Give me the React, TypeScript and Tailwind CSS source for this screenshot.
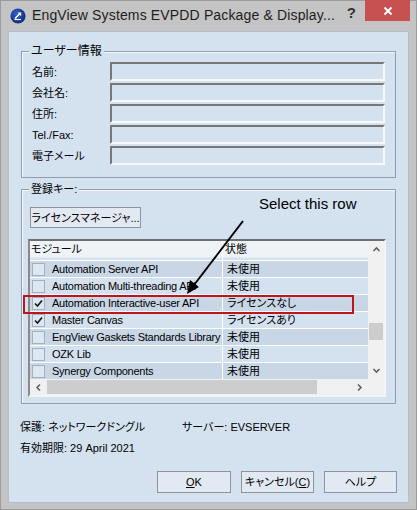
import React from "react";

const rows = [
  { name: "Automation Server API", status: "未使用", checked: false, dark: true },
  { name: "Automation Multi-threading API", status: "未使用", checked: false, dark: false },
  { name: "Automation Interactive-user API", status: "ライセンスなし", checked: true, dark: true },
  { name: "Master Canvas", status: "ライセンスあり", checked: true, dark: false },
  { name: "EngView Gaskets Standards Library", status: "未使用", checked: false, dark: true },
  { name: "OZK Lib", status: "未使用", checked: false, dark: false },
  { name: "Synergy Components", status: "未使用", checked: false, dark: true },
];

const fields = ["名前:", "会社名:", "住所:", "Tel./Fax:", "電子メール"];

function Check({ checked }: { checked: boolean }) {
  return (
    <div className="w-[13px] h-[13px] border border-[#a3afbf] bg-[#dde7f2] flex items-center justify-center shrink-0">
      {checked && (
        <svg width="11" height="11" viewBox="0 0 11 11">
          <polyline points="2,5.5 4.5,8 9,2.5" fill="none" stroke="#1c1c1c" strokeWidth="1.7" />
        </svg>
      )}
    </div>
  );
}

function Chevron({ dir }: { dir: "up" | "down" | "left" | "right" }) {
  const pts: Record<string, string> = {
    up: "1.5,6 4.5,3 7.5,6",
    down: "1.5,3 4.5,6 7.5,3",
    left: "6,1.5 3,4.5 6,7.5",
    right: "3,1.5 6,4.5 3,7.5",
  };
  return (
    <svg width="9" height="9" viewBox="0 0 9 9">
      <polyline points={pts[dir]} fill="none" stroke="#606060" strokeWidth="1.6" />
    </svg>
  );
}

export default function App() {
  return (
    <div className="relative w-[417px] h-[510px] bg-[#c4c4c4] shadow-[inset_0_0_0_1px_#9c9c9c] font-['Liberation_Sans','Noto_Sans_CJK_JP',sans-serif] [font-feature-settings:'palt'] text-black overflow-hidden">
      {/* Title bar */}
      <div className="h-[31px] flex items-start">
        <div className="ml-[10px] mt-[8px] w-[16px] h-[16px]">
          <svg width="16" height="16" viewBox="0 0 16 16">
            <defs>
              <radialGradient id="g" cx="0.4" cy="0.35" r="0.7">
                <stop offset="0" stopColor="#2f5fc9" />
                <stop offset="1" stopColor="#0b2a7a" />
              </radialGradient>
            </defs>
            <circle cx="8" cy="8" r="7.6" fill="url(#g)" />
            <path d="M5 10.5 L10.5 5" stroke="#fff" strokeWidth="1.6" />
            <path d="M7.5 4.5 L11.2 4.5 L11.2 8.2 Z" fill="#fff" />
            <path d="M4.5 11.5 L11 11.5" stroke="#fff" strokeWidth="1.2" />
          </svg>
        </div>
        <div className="ml-[6px] mt-[6px] text-[14px] leading-[18px] tracking-[0.15px] text-[#1e1e1e] whitespace-nowrap">
          EngView Systems EVPDD Package &amp; Display...
        </div>
        <div className="flex-1" />
        <div className="mt-[4px] mr-[9px] text-[15px] leading-[18px] font-bold text-[#333]">?</div>
        <div className="mr-[7px] w-[45px] h-[21px] bg-[#c75050] flex items-center justify-center">
          <svg width="10" height="10" viewBox="0 0 10 10">
            <path d="M1.5 1.5 L8.5 8.5 M8.5 1.5 L1.5 8.5" stroke="#fff" strokeWidth="2" />
          </svg>
        </div>
      </div>

      {/* Client area */}
      <div className="mx-[8px] h-[472px] bg-[#d4e2f0] shadow-[inset_0_0_0_1px_#b2bfcc] flex flex-col px-[13px] pt-[20px] text-[11px]">
        {/* User info group */}
        <div className="relative h-[127px] border border-[#8d9db2] shadow-[inset_1px_1px_0_#f4f8fc]">
          <span className="absolute left-[7px] -top-[9px] px-[2px] bg-[#d4e2f0] leading-[16px] text-[12px]">ユーザー情報</span>
          <div className="pt-[10px] flex flex-col gap-[2px]">
            {fields.map((f) => (
              <div key={f} className="flex items-center h-[19px]">
                <div className="w-[88px] pl-[10px] leading-[16px] whitespace-nowrap">{f}</div>
                <div className="w-[275px] h-[19px] border-2 border-t-[#777] border-l-[#777] border-b-[#f8f8f8] border-r-[#f8f8f8]" />
              </div>
            ))}
          </div>
        </div>

        {/* License group */}
        <div className="relative mt-[11px] h-[215px] border border-[#8d9db2] shadow-[inset_1px_1px_0_#f4f8fc]">
          <span className="absolute left-[7px] -top-[9px] px-[2px] bg-[#d4e2f0] leading-[16px]">登録キー:</span>
          <div className="pt-[17px] pl-[8px]">
            <div className="w-[111px] h-[21px] border border-[#8e949c] bg-[#e3e9f2] flex items-center justify-center leading-[16px] whitespace-nowrap">
              ライセンスマネージャ...
            </div>
          </div>
          <div className="mt-[11px] ml-[6px] w-[358px] h-[158px] border-2 border-t-[#6e6e6e] border-l-[#8a8a8a] border-b-[#f4f4f4] border-r-[#f4f4f4] flex flex-col">
            <div className="flex h-[138px]">
              <div className="flex-1 flex flex-col overflow-hidden">
                <div className="h-[16px] shrink-0 flex bg-[#eef3f8] leading-[16px]">
                  <div className="w-[192px] pl-[1px]">モジュール</div>
                  <div className="flex-1 border-l border-white pl-[2px]">状態</div>
                </div>
                <div className="h-[4px] shrink-0 flex bg-[#d4e1ef] border-b border-white border-t border-t-[#e3ebf4]">
                  <div className="w-[192px]" />
                  <div className="flex-1 border-l border-white" />
                </div>
                {rows.map((r) => (
                  <div
                    key={r.name}
                    className={`h-[17px] shrink-0 flex border-b border-white ${r.dark ? "bg-[#c9d6e6]" : "bg-[#d4e1ef]"}`}
                  >
                    <div className="w-[192px] flex items-center overflow-hidden whitespace-nowrap">
                      <div className="ml-[2px]">
                        <Check checked={r.checked} />
                      </div>
                      <span className="ml-[7px] leading-[16px] tracking-[-0.25px]">{r.name}</span>
                    </div>
                    <div className="flex-1 border-l border-white pl-[4px] leading-[16px] whitespace-nowrap">{r.status}</div>
                  </div>
                ))}
              </div>
              <div className="w-[16px] bg-[#f0f0f0] flex flex-col">
                <div className="h-[17px] flex items-center justify-center">
                  <Chevron dir="up" />
                </div>
                <div className="flex-1 relative">
                  <div className="mt-[65px] mx-[1px] h-[17px] bg-[#cdcdcd]" />
                </div>
                <div className="h-[17px] flex items-center justify-center">
                  <Chevron dir="down" />
                </div>
              </div>
            </div>
            <div className="flex h-[16px] bg-[#f0f0f0]">
              <div className="w-[17px] flex items-center justify-center">
                <Chevron dir="left" />
              </div>
              <div className="w-[270px] my-[1px] bg-[#cdcdcd]" />
              <div className="flex-1" />
              <div className="w-[17px] flex items-center justify-center">
                <Chevron dir="right" />
              </div>
              <div className="w-[16px] bg-[#f0f0f0]" />
            </div>
          </div>
        </div>

        {/* Info text */}
        <div className="-mx-[1px] mt-[15px] flex leading-[16px] whitespace-nowrap">
          <div className="w-[162px]">保護: ネットワークドングル</div>
          <div>サーバー: EVSERVER</div>
        </div>
        <div className="-mx-[1px] mt-[5px] leading-[16px] whitespace-nowrap">有効期限: 29 April 2021</div>

        {/* Buttons */}
        <div className="mt-[15px] flex justify-end gap-[10px] -mr-[1px]">
          <div className="w-[74px] h-[22px] border border-[#8e949c] bg-[#e3e9f2] flex items-center justify-center leading-[16px]">
            <span><u>O</u>K</span>
          </div>
          <div className="w-[73px] h-[22px] border border-[#8e949c] bg-[#e3e9f2] flex items-center justify-center leading-[16px] whitespace-nowrap">
            <span>キャンセル(<u>C</u>)</span>
          </div>
          <div className="w-[73px] h-[22px] border border-[#8e949c] bg-[#e3e9f2] flex items-center justify-center leading-[16px]">
            ヘルプ
          </div>
        </div>
      </div>

      {/* Annotations overlay */}
      <div className="absolute left-[259px] top-[195px] text-[15px] leading-[18px] text-black whitespace-nowrap">
        Select this row
      </div>
      <svg className="absolute left-0 top-0 pointer-events-none" width="417" height="510" viewBox="0 0 417 510">
        <line x1="243" y1="221" x2="194" y2="285" stroke="#000" strokeWidth="2" />
        <polygon points="187,294 190,280 199,287" fill="#000" />
      </svg>
      <div className="absolute left-[23px] top-[295px] w-[331px] h-[19px] border-2 border-[#c0141b] pointer-events-none" />
    </div>
  );
}
